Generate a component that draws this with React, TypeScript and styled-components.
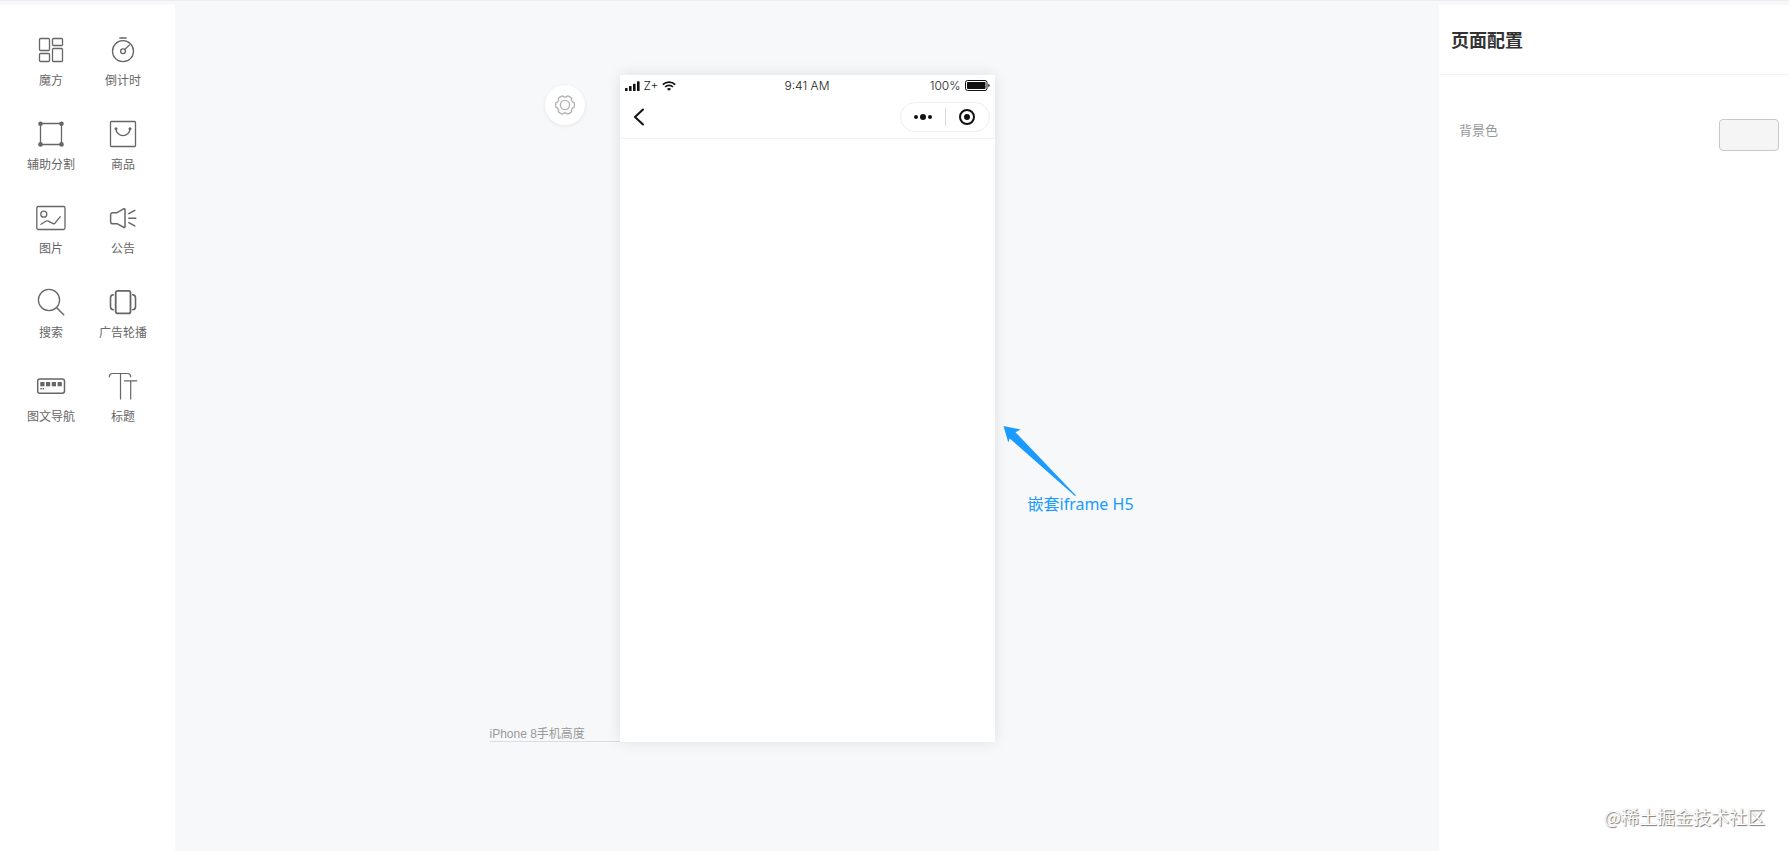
import React from "react";
import styled, { createGlobalStyle } from "styled-components";

const GlobalStyle = createGlobalStyle`
  *, *::before, *::after { box-sizing: border-box; }
  body {
    margin: 0;
    background: #f7f8fa;
    color: #666;
    font-family: "Liberation Sans", "Noto Sans CJK SC", sans-serif;
    font-size: 12px;
    line-height: 16px;
  }
  button { font: inherit; color: inherit; padding: 0; border: 0; background: none; cursor: pointer; }
  svg { display: block; flex: none; }
`;

const Page = styled.div`
  display: flex;
  min-height: 100vh;
  padding-top: 4px;
  border-top: 1px solid #ebecf0;
`;

const Sidebar = styled.nav`
  flex: none;
  width: 175px;
  padding: 17px 16px 0 15px;
  background: #fff;
`;

const WidgetGrid = styled.div`
  display: grid;
  grid-template-columns: repeat(2, 72px);
  grid-auto-rows: 84px;
`;

const WidgetButton = styled.button`
  display: flex;
  flex-direction: column;
  align-items: center;
  justify-content: flex-start;
  gap: 7px;
  padding-top: 12px;
  white-space: nowrap;
`;

const Stage = styled.main`
  flex: 1;
  display: grid;
  grid-template-columns: 1fr 375px 1fr;
  align-content: start;
  align-items: start;
  padding: 70px 0;
`;

const LeftNotes = styled.div`
  display: flex;
  flex-direction: column;
  justify-content: space-between;
  align-items: flex-end;
  align-self: stretch;
`;

const GearButton = styled.button`
  display: flex;
  align-items: center;
  justify-content: center;
  width: 40px;
  height: 40px;
  margin: 10px 35px 0 0;
  border-radius: 50%;
  background: #fff;
  box-shadow: 0 1px 4px rgba(0, 0, 0, 0.08);
`;

const HeightMark = styled.div`
  width: 130px;
  border-bottom: 1px solid #dcdde0;
  color: #999;
  line-height: 14px;
`;

const Phone = styled.section`
  height: 667px;
  background: #fff;
  box-shadow: 0 0 14px rgba(0, 0, 0, 0.1);
`;

const StatusBar = styled.div`
  display: grid;
  grid-template-columns: 1fr auto 1fr;
  align-items: center;
  height: 20px;
  padding: 1px 5px 0;
  color: #222;
  font-family: Inter, "Liberation Sans", sans-serif;
  font-weight: 300;
`;

const StatusGroup = styled.div<{ $end?: boolean }>`
  display: flex;
  align-items: center;
  justify-content: ${(p) => (p.$end ? "flex-end" : "flex-start")};
  gap: 4px;
`;

const NavBar = styled.div`
  display: flex;
  align-items: center;
  justify-content: space-between;
  height: 44px;
  padding: 0 5px 0 11px;
  border-bottom: 1px solid #f2f2f3;
`;

const Capsule = styled.div`
  display: flex;
  align-items: center;
  width: 90px;
  height: 30px;
  padding-left: 1px;
  border: 1px solid #eee;
  border-radius: 15px;
`;

const CapsuleButton = styled.button`
  flex: 1;
  display: flex;
  justify-content: center;
  & + & { border-left: 1px solid #d8d8d8; }
`;

const Annotation = styled.div`
  padding: 351px 0 0 8px;
  color: #1a9bff;
  font: 16px/16px "Noto Sans", "Noto Sans CJK SC", sans-serif;
`;

const AnnotationText = styled.p`
  margin: 0;
  padding-left: 25px;
`;

const ConfigPanel = styled.aside`
  display: flex;
  flex-direction: column;
  flex: none;
  width: 350px;
  background: #fff;
`;

const PanelTitle = styled.h1`
  margin: 0;
  height: 70px;
  padding: 2px 12px 0;
  border-bottom: 1px solid #f2f3f5;
  color: #323233;
  font-size: 18px;
  font-weight: 700;
  line-height: 68px;
`;

const Field = styled.div`
  display: flex;
  justify-content: space-between;
  padding: 44px 10px 0 20px;
`;

const FieldLabel = styled.label`
  color: #969799;
  font-size: 13px;
  line-height: 24px;
`;

const ColorSwatch = styled.button`
  width: 60px;
  height: 32px;
  border: 1px solid #c8c9cc;
  border-radius: 4px;
  background: #f5f5f5;
`;

const Watermark = styled.footer`
  margin-top: auto;
  padding: 0 24px 22px;
  color: #fff;
  font-family: "Noto Sans CJK SC", sans-serif;
  font-size: 18px;
  line-height: 26px;
  text-align: right;
  text-shadow: 1px 1px 1px #777, 0 0 1px #ccc;
`;

const WidgetIcon = ({ children }: { children: React.ReactNode }) => (
  <svg width="32" height="32" viewBox="0 0 32 32" fill="none" stroke="#666" strokeWidth="1.3" strokeLinecap="round" strokeLinejoin="round" aria-hidden="true">
    {children}
  </svg>
);

const widgets: { label: string; icon: React.ReactNode }[] = [
  {
    label: "魔方",
    icon: (
      <>
        <rect x="4.5" y="4.5" width="10" height="12" rx="1" />
        <rect x="17.5" y="4.5" width="10" height="7" rx="1" />
        <rect x="4.5" y="19.5" width="10" height="8" rx="1" />
        <rect x="17.5" y="14.5" width="10" height="13" rx="1" />
      </>
    ),
  },
  {
    label: "倒计时",
    icon: (
      <>
        <circle cx="16" cy="17.2" r="10.5" />
        <path d="M12.8 4h6.4M18 15.2l4.5-4.3" />
        <circle cx="16" cy="17.2" r="2.4" />
      </>
    ),
  },
  {
    label: "辅助分割",
    icon: (
      <>
        <rect x="5.5" y="5.5" width="21" height="21" />
        <g fill="#666" stroke="none">
          <circle cx="5.5" cy="5.7" r="2.3" />
          <circle cx="26.5" cy="5.7" r="2.3" />
          <circle cx="5.5" cy="26.4" r="2.3" />
          <circle cx="26.5" cy="26.4" r="2.3" />
        </g>
      </>
    ),
  },
  {
    label: "商品",
    icon: (
      <>
        <rect x="3.5" y="3.5" width="25" height="25" rx="1" />
        <path d="M9 10.7a7 6.9 0 0 0 14 0" />
        <g fill="#666" stroke="none">
          <circle cx="9" cy="10.7" r="1.5" />
          <circle cx="23" cy="10.7" r="1.5" />
        </g>
      </>
    ),
  },
  {
    label: "图片",
    icon: (
      <>
        <rect x="1.8" y="4.5" width="28.2" height="23" rx="1.5" />
        <circle cx="8.8" cy="12.2" r="3" />
        <path d="M6 22.3l4.8-3q1.2-.7 2.4-.2l5 2.5q1 .5 1.8-.4l5.3-6.5" />
      </>
    ),
  },
  {
    label: "公告",
    icon: (
      <path d="M10 10.7H5.2Q3.6 11 3.6 13v6.5q0 2 1.6 2.2H10l7 3.8q1 .3 1-.8V7.5q0-1.1-1-.8zM21.8 11.6l6-3.3M21.8 16.2h7M21.8 20.6l6 3.3" strokeWidth="1.5" />
    ),
  },
  {
    label: "搜索",
    icon: (
      <>
        <circle cx="14" cy="14" r="10.6" />
        <path d="M21.7 21.7l7 7" strokeWidth="1.5" />
      </>
    ),
  },
  {
    label: "广告轮播",
    icon: (
      <>
        <rect x="8.7" y="4.8" width="14.8" height="22.6" rx="2" strokeWidth="1.8" />
        <path d="M6.3 8.7q-2.8.2-2.8 3v9q0 2.8 2.8 3M25.7 8.7q2.8.2 2.8 3v9q0 2.8-2.8 3" strokeWidth="1.6" />
      </>
    ),
  },
  {
    label: "图文导航",
    icon: (
      <>
        <rect x="2.7" y="9" width="26.8" height="14.3" rx="2.2" strokeWidth="1.5" />
        <g fill="#666" stroke="none">
          <rect x="5.3" y="12" width="4.2" height="4.3" />
          <rect x="11" y="12" width="4.2" height="4.3" />
          <rect x="16.8" y="12" width="4.2" height="4.3" />
          <rect x="22.6" y="12" width="4.2" height="4.3" />
          <rect x="5.3" y="18" width="1.5" height="1.4" />
          <rect x="7.5" y="18" width="1.5" height="1.4" />
        </g>
      </>
    ),
  },
  {
    label: "标题",
    icon: (
      <path d="M2.3 6.8q.3-3.3 3-3.3h15.4q2.7 0 3 3.3M13.5 3.5v25.5M17.5 10.8h12.3M23.7 10.8v18.2" strokeWidth="1.2" />
    ),
  },
];

const gearOutline = Array.from({ length: 72 }, (_, i) => {
  const angle = (i * Math.PI) / 36;
  const notch = Math.max(0, -Math.cos(6 * angle));
  const radius = 9.4 - 1.5 * Math.sqrt(notch);
  return `${(10 + radius * Math.cos(angle)).toFixed(2)},${(10 + radius * Math.sin(angle)).toFixed(2)}`;
}).join(" ");

export default function App() {
  return (
    <>
      <GlobalStyle />
      <Page>
        <Sidebar>
          <WidgetGrid>
            {widgets.map(({ label, icon }) => (
              <WidgetButton key={label} type="button">
                <WidgetIcon>{icon}</WidgetIcon>
                {label}
              </WidgetButton>
            ))}
          </WidgetGrid>
        </Sidebar>

        <Stage>
          <LeftNotes>
            <GearButton type="button" aria-label="页面配置">
              <svg width="20" height="20" viewBox="0 0 20 20" fill="none" stroke="#b2b2b4" strokeWidth="1.4" strokeLinejoin="round">
                <polygon points={gearOutline} />
                <circle cx="10" cy="10" r="4.6" />
              </svg>
            </GearButton>
            <HeightMark>iPhone 8手机高度</HeightMark>
          </LeftNotes>

          <Phone>
            <StatusBar>
              <StatusGroup>
                <svg width="15" height="10" viewBox="0 0 15 10" fill="#111">
                  <rect x="0" y="7" width="2.6" height="3" rx="0.6" />
                  <rect x="4" y="5" width="2.6" height="5" rx="0.6" />
                  <rect x="8" y="2.8" width="2.6" height="7.2" rx="0.6" />
                  <rect x="12" y="0.3" width="2.6" height="9.7" rx="0.6" />
                </svg>
                <span>Z+</span>
                <svg width="14" height="10" viewBox="0 0 14 10" fill="none" stroke="#111" strokeWidth="1.7">
                  <path d="M.8 3.7a8.8 8.8 0 0 1 12.4 0M3.1 6a5.5 5.5 0 0 1 7.8 0" />
                  <path d="M7 9.8L4.9 7.9a3.1 3.1 0 0 1 4.2 0z" fill="#111" stroke="none" />
                </svg>
              </StatusGroup>
              <span>9:41 AM</span>
              <StatusGroup $end>
                <span>100%</span>
                <svg width="25" height="11" viewBox="0 0 25 11" fill="none">
                  <rect x="0.5" y="0.5" width="21.5" height="10" rx="2" stroke="#111" />
                  <rect x="2" y="2" width="18.5" height="7" rx="0.8" fill="#111" />
                  <path d="M23.3 3.7q1.4.6 1.4 1.8t-1.4 1.8z" fill="#111" />
                </svg>
              </StatusGroup>
            </StatusBar>
            <NavBar>
              <button type="button" aria-label="返回">
                <svg width="16" height="18" viewBox="0 0 16 18" fill="none" stroke="#111" strokeWidth="2" strokeLinecap="round" strokeLinejoin="round">
                  <path d="M12 1.5L4 9l8 7.5" />
                </svg>
              </button>
              <Capsule>
                <CapsuleButton type="button" aria-label="更多">
                  <svg width="18" height="18" viewBox="0 0 18 18" fill="#111">
                    <circle cx="2" cy="9" r="2" />
                    <circle cx="9" cy="9" r="3" />
                    <circle cx="16" cy="9" r="2" />
                  </svg>
                </CapsuleButton>
                <CapsuleButton type="button" aria-label="关闭">
                  <svg width="18" height="18" viewBox="0 0 18 18" fill="none">
                    <circle cx="9" cy="9" r="7" stroke="#111" strokeWidth="2" />
                    <circle cx="9" cy="9" r="3" fill="#111" />
                  </svg>
                </CapsuleButton>
              </Capsule>
            </NavBar>
          </Phone>

          <Annotation>
            <svg width="74" height="70" viewBox="0 0 74 70" fill="#1a9bff" aria-hidden="true">
              <path d="M.5 0L17.5 3.5L12.5 6.3L73 69.5L72 70L6.7 12.5L5.3 16.5z" />
            </svg>
            <AnnotationText>嵌套iframe H5</AnnotationText>
          </Annotation>
        </Stage>

        <ConfigPanel>
          <PanelTitle>页面配置</PanelTitle>
          <Field>
            <FieldLabel htmlFor="background-color">背景色</FieldLabel>
            <ColorSwatch id="background-color" type="button" />
          </Field>
          <Watermark>@稀土掘金技术社区</Watermark>
        </ConfigPanel>
      </Page>
    </>
  );
}
